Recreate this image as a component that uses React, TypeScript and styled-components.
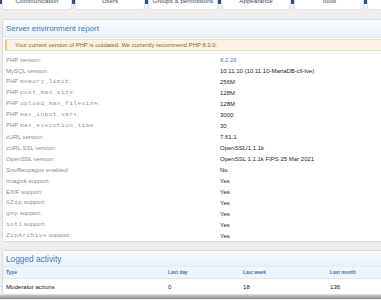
import styled, { createGlobalStyle } from "styled-components";

const GlobalStyle = createGlobalStyle`
  html, body {
    margin: 0;
    padding: 0;
    overflow: hidden;
    background: #eeeeee;
    font-family: "Liberation Sans", Arial, sans-serif;
  }
`;

const tabs = ["Communication", "Users", "Groups & permissions", "Appearance", "Tools", ""];

const envRows: { label: string; code?: string; suffix?: string; value: string; link?: boolean }[] = [
  { label: "PHP version:", value: "8.2.26", link: true },
  { label: "MySQL version:", value: "10.11.10 (10.11.10-MariaDB-cll-lve)" },
  { label: "PHP ", code: "memory_limit", suffix: ":", value: "256M" },
  { label: "PHP ", code: "post_max_size", suffix: ":", value: "128M" },
  { label: "PHP ", code: "upload_max_filesize", suffix: ":", value: "128M" },
  { label: "PHP ", code: "max_input_vars", suffix: ":", value: "3000" },
  { label: "PHP ", code: "max_execution_time", suffix: ":", value: "30" },
  { label: "cURL version:", value: "7.61.1" },
  { label: "cURL SSL version:", value: "OpenSSL/1.1.1k" },
  { label: "OpenSSL version:", value: "OpenSSL 1.1.1k FIPS 25 Mar 2021" },
  { label: "Snuffleupagus enabled:", value: "No" },
  { label: "Imagick support:", value: "Yes" },
  { label: "EXIF support:", value: "Yes" },
  { label: "", code: "GZip", suffix: " support:", value: "Yes" },
  { label: "", code: "gmp", suffix: " support:", value: "Yes" },
  { label: "", code: "intl", suffix: " support:", value: "Yes" },
  { label: "", code: "ZipArchive", suffix: " support:", value: "Yes" },
];

const App = () => {
  return (
    <>
      <GlobalStyle />
      <Page>
        <TabBar>
          {tabs.map((t, i) => (
            <Tab key={i}>{t}</Tab>
          ))}
        </TabBar>

        <Panel>
          <PanelHeader>Server environment report</PanelHeader>
          <Notice>Your current version of PHP is outdated. We currently recommend PHP 8.3.0.</Notice>
          <EnvList>
            {envRows.map((r, i) => (
              <EnvRow key={i}>
                <EnvLabel>
                  {r.label}
                  {r.code && <Code>{r.code}</Code>}
                  {r.suffix}
                </EnvLabel>
                <EnvValue $link={r.link}>{r.value}</EnvValue>
              </EnvRow>
            ))}
          </EnvList>
        </Panel>

        <Panel>
          <PanelHeader $large>Logged activity</PanelHeader>
          <ActivityHead>
            <span>Type</span>
            <span>Last day</span>
            <span>Last week</span>
            <span>Last month</span>
          </ActivityHead>
          <ActivityRow>
            <span>Moderator actions</span>
            <span>0</span>
            <span>18</span>
            <span>136</span>
          </ActivityRow>
        </Panel>
        <BottomEdge />
      </Page>
    </>
  );
};

const Page = styled.div`
  width: 381px;
  height: 300px;
  display: flex;
  flex-direction: column;
  gap: 8px;
  overflow: hidden;
`;

const TabBar = styled.div`
  display: flex;
  gap: 3px;
  padding-left: 2px;
  height: 11px;
  flex-shrink: 0;
  overflow: hidden;
  background: linear-gradient(to bottom, #22467a 0, #2c5891 4px, #eeeeee 4px);
`;

const Tab = styled.div`
  width: 70px;
  height: 10px;
  flex-shrink: 0;
  background: #ffffff;
  border: 1px solid #dde2e8;
  border-top: none;
  border-radius: 0 0 3px 3px;
  display: flex;
  align-items: flex-end;
  justify-content: center;
  padding-bottom: 5px;
  box-sizing: border-box;
  font-size: 6.2px;
  line-height: 6px;
  color: #3a4d68;
  white-space: nowrap;
`;

const Panel = styled.div`
  margin-left: 2px;
  margin-right: -6px;
  background: #ffffff;
  border: 1px solid #d8dde3;
  border-radius: 3px;
  flex-shrink: 0;
`;

const PanelHeader = styled.div<{ $large?: boolean }>`
  height: ${(p) => (p.$large ? "15px" : "17px")};
  display: flex;
  align-items: center;
  padding-left: 3px;
  font-size: ${(p) => (p.$large ? "8.3px" : "8px")};
  color: #3b78b8;
  background: linear-gradient(to bottom, #fbfdff, #e8f1fb);
  border-bottom: 1px solid #e3ebf3;
`;

const Notice = styled.div`
  margin: 1px 3px 0 2px;
  height: 10px;
  display: flex;
  align-items: center;
  padding-left: 8px;
  font-size: 5.9px;
  color: #94611f;
  background: #fdf2e4;
  border: 1px solid #f1dcc0;
  border-left: 2px solid #f0c690;
`;

const EnvList = styled.div`
  padding-top: 3px;
`;

const EnvRow = styled.div`
  display: grid;
  grid-template-columns: 214px 1fr;
  height: 11px;
  align-items: center;
  padding-left: 3px;
  font-size: 6px;
`;

const EnvLabel = styled.span`
  color: #8b8b8b;
  white-space: nowrap;
`;

const Code = styled.span`
  font-family: "Liberation Mono", "DejaVu Sans Mono", monospace;
  font-size: 6.1px;
  letter-spacing: 0.45px;
  color: #979797;
`;

const EnvValue = styled.span<{ $link?: boolean }>`
  color: ${(p) => (p.$link ? "#4a86c5" : "#1e1e1e")};
  white-space: nowrap;
`;

const ActivityHead = styled.div`
  display: grid;
  grid-template-columns: 162px 75px 87px 1fr;
  height: 11px;
  align-items: center;
  padding-left: 3px;
  font-size: 4.8px;
  font-weight: bold;
  color: #3b78b8;
  background: #eef5fc;
  border-bottom: 1px solid #dfe7ef;
`;

const ActivityRow = styled.div`
  display: grid;
  grid-template-columns: 162px 75px 87px 1fr;
  height: 15px;
  align-items: center;
  padding-left: 3px;
  font-size: 6.1px;
  color: #141414;
`;

const BottomEdge = styled.div`
  margin-top: -8px;
  height: 4px;
  background: linear-gradient(to bottom, #c8c8c8, #8a8a8a);
  flex-shrink: 0;
`;

export default App;
